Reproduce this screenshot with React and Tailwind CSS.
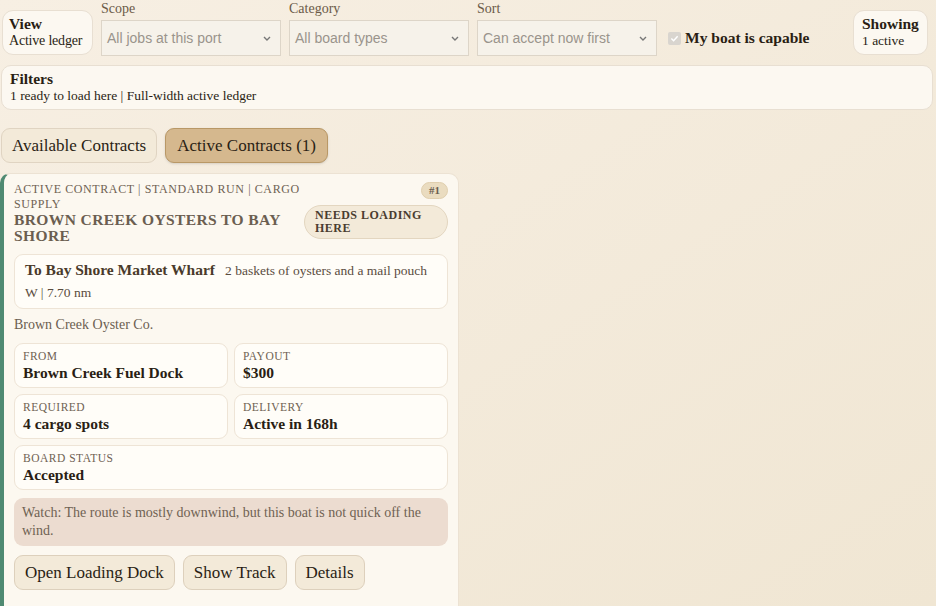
import React from "react";

const serif = { fontFamily: '"Liberation Serif", "DejaVu Serif", serif' };

function Select({ label, value, width }) {
  return (
    <div className="flex flex-col" style={{ width }}>
      <span className="text-[14px] leading-[16px] text-[#6b5a48]">{label}</span>
      <div className="mt-[3px] h-[36px] border border-[#ddd5c8] bg-[#f6f2ea] flex items-center justify-between px-[5px] text-[14px] text-[#9a948c]" style={{ fontFamily: '"Liberation Sans", Arial, sans-serif' }}>
        <span>{value}</span>
        <svg width="10" height="10" viewBox="0 0 10 10" className="mr-[3px]"><path d="M2 4l3 3 3-3" fill="none" stroke="#777" strokeWidth="1.4" /></svg>
      </div>
    </div>
  );
}

function Stat({ label, value, full }) {
  return (
    <div className={`rounded-[9px] border border-[#eee4d6] bg-[#fffdf8] px-[8px] pt-[6px] pb-[5px] ${full ? "col-span-2" : ""}`}>
      <div className="text-[11.5px] tracking-[0.5px] text-[#6f6253] leading-[13px]">{label}</div>
      <div className="text-[15.5px] font-bold text-[#2a1e14] leading-[19px]">{value}</div>
    </div>
  );
}

function Btn({ children }) {
  return (
    <button className="h-[35px] px-[10px] rounded-[9px] border border-[#ddd0bc] bg-[#f3ead9] text-[17px] text-[#2a1e14]">{children}</button>
  );
}

export default function App() {
  return (
    <div className="w-[936px] h-[606px] overflow-hidden bg-gradient-to-br from-[#f7efe3] to-[#f0e6d3] text-[#2a1e14]" style={serif}>
      <div className="flex items-start pl-[2px] pt-[1px] gap-[8px]">
        <div className="mt-[9px] w-[91px] h-[45px] rounded-[11px] border border-[#e8dfd2] bg-[#fcf8f1] px-[6px] py-[4px] leading-[17px] whitespace-nowrap">
          <div className="text-[15.5px] font-bold">View</div>
          <div className="text-[14px] tracking-[-0.2px]">Active ledger</div>
        </div>
        <Select label="Scope" value="All jobs at this port" width={180} />
        <Select label="Category" value="All board types" width={180} />
        <Select label="Sort" value="Can accept now first" width={180} />
        <div className="flex items-center mt-[19px] ml-[3px] gap-[4px] h-[36px]">
          <div className="w-[13px] h-[13px] rounded-[2px] bg-[#d9d5cf] flex items-center justify-center">
            <svg width="9" height="9" viewBox="0 0 10 10"><path d="M1.5 5l2.5 2.5 4.5-5" fill="none" stroke="#fff" strokeWidth="1.6" /></svg>
          </div>
          <span className="text-[15.5px] font-bold">My boat is capable</span>
        </div>
        <div className="ml-auto mr-[8px] mt-[9px] w-[75px] h-[45px] rounded-[11px] border border-[#e8dfd2] bg-[#fcf8f1] px-[8px] py-[4px] leading-[17px]">
          <div className="text-[15.5px] font-bold">Showing</div>
          <div className="text-[13.5px]">1 active</div>
        </div>
      </div>
      <div className="mx-[1px] mr-[3px] mt-[9px] h-[45px] rounded-[10px] border border-[#e8dfd2] bg-[#fcf8f1] px-[8px] pt-[4px] leading-[17px]">
        <div className="text-[15.5px] font-bold">Filters</div>
        <div className="text-[13.5px]">1 ready to load here | Full-width active ledger</div>
      </div>
      <div className="flex gap-[8px] mt-[18px] ml-[1px]">
        <button className="h-[35px] px-[10px] rounded-[9px] border border-[#e0d4c2] bg-[#f3ead9] text-[17px]">Available Contracts</button>
        <button className="h-[35px] px-[11px] rounded-[9px] border border-[#b99866] bg-[#d5b88e] text-[17px] shadow-sm">Active Contracts (1)</button>
      </div>
      <div className="mt-[10px] w-[459px] rounded-tl-[10px] rounded-tr-[10px] border-l-[4px] border-l-[#4f8a72] border border-[#ece2d3] bg-[#fcf8f0] pl-[10px] pr-[10px] pt-[8px] pb-[20px]">
        <div className="flex justify-between">
          <div className="w-[290px]">
            <div className="text-[12px] leading-[15px] tracking-[0.6px] text-[#6f6253]">ACTIVE CONTRACT | STANDARD RUN | CARGO SUPPLY</div>
            <div className="text-[15.5px] font-bold leading-[16px] tracking-[0.4px] text-[#6b5e50]">BROWN CREEK OYSTERS TO BAY SHORE</div>
          </div>
          <div className="flex flex-col items-end">
            <span className="rounded-full bg-[#eadcc0] border border-[#e0cfae] px-[7px] text-[11px] font-bold leading-[15px] text-[#6b5e50]">#1</span>
            <span className="mt-[6px] w-[144px] rounded-full bg-[#f3ead9] border border-[#e3d6c0] px-[10px] py-[3px] text-[12px] font-bold leading-[13px] tracking-[0.5px] text-[#4a3d30]">NEEDS LOADING HERE</span>
          </div>
        </div>
        <div className="mt-[10px] rounded-[9px] border border-[#eee4d6] bg-[#fffdf8] px-[10px] pt-[4px] pb-[4px] leading-[22px]">
          <span className="text-[15.5px] font-bold text-[#4a3a2a]">To Bay Shore Market Wharf</span>
          <span className="ml-[10px] text-[13.5px] text-[#5a4c3e]">2 baskets of oysters and a mail pouch</span>
          <div className="text-[13.5px] text-[#5a4c3e]">W | 7.70 nm</div>
        </div>
        <div className="mt-[6px] text-[14px] leading-[20px] text-[#6b5e50]">Brown Creek Oyster Co.</div>
        <div className="mt-[8px] grid grid-cols-2 gap-[6px]">
          <Stat label="FROM" value="Brown Creek Fuel Dock" />
          <Stat label="PAYOUT" value="$300" />
          <Stat label="REQUIRED" value="4 cargo spots" />
          <Stat label="DELIVERY" value="Active in 168h" />
          <Stat label="BOARD STATUS" value="Accepted" full />
        </div>
        <div className="mt-[8px] rounded-[9px] bg-[#ecdcd0] px-[8px] py-[6px] text-[14px] leading-[18px] text-[#6f6253]">
          Watch: The route is mostly downwind, but this boat is not quick off the wind.
        </div>
        <div className="mt-[9px] flex gap-[8px]">
          <Btn>Open Loading Dock</Btn>
          <Btn>Show Track</Btn>
          <Btn>Details</Btn>
        </div>
      </div>
    </div>
  );
}
